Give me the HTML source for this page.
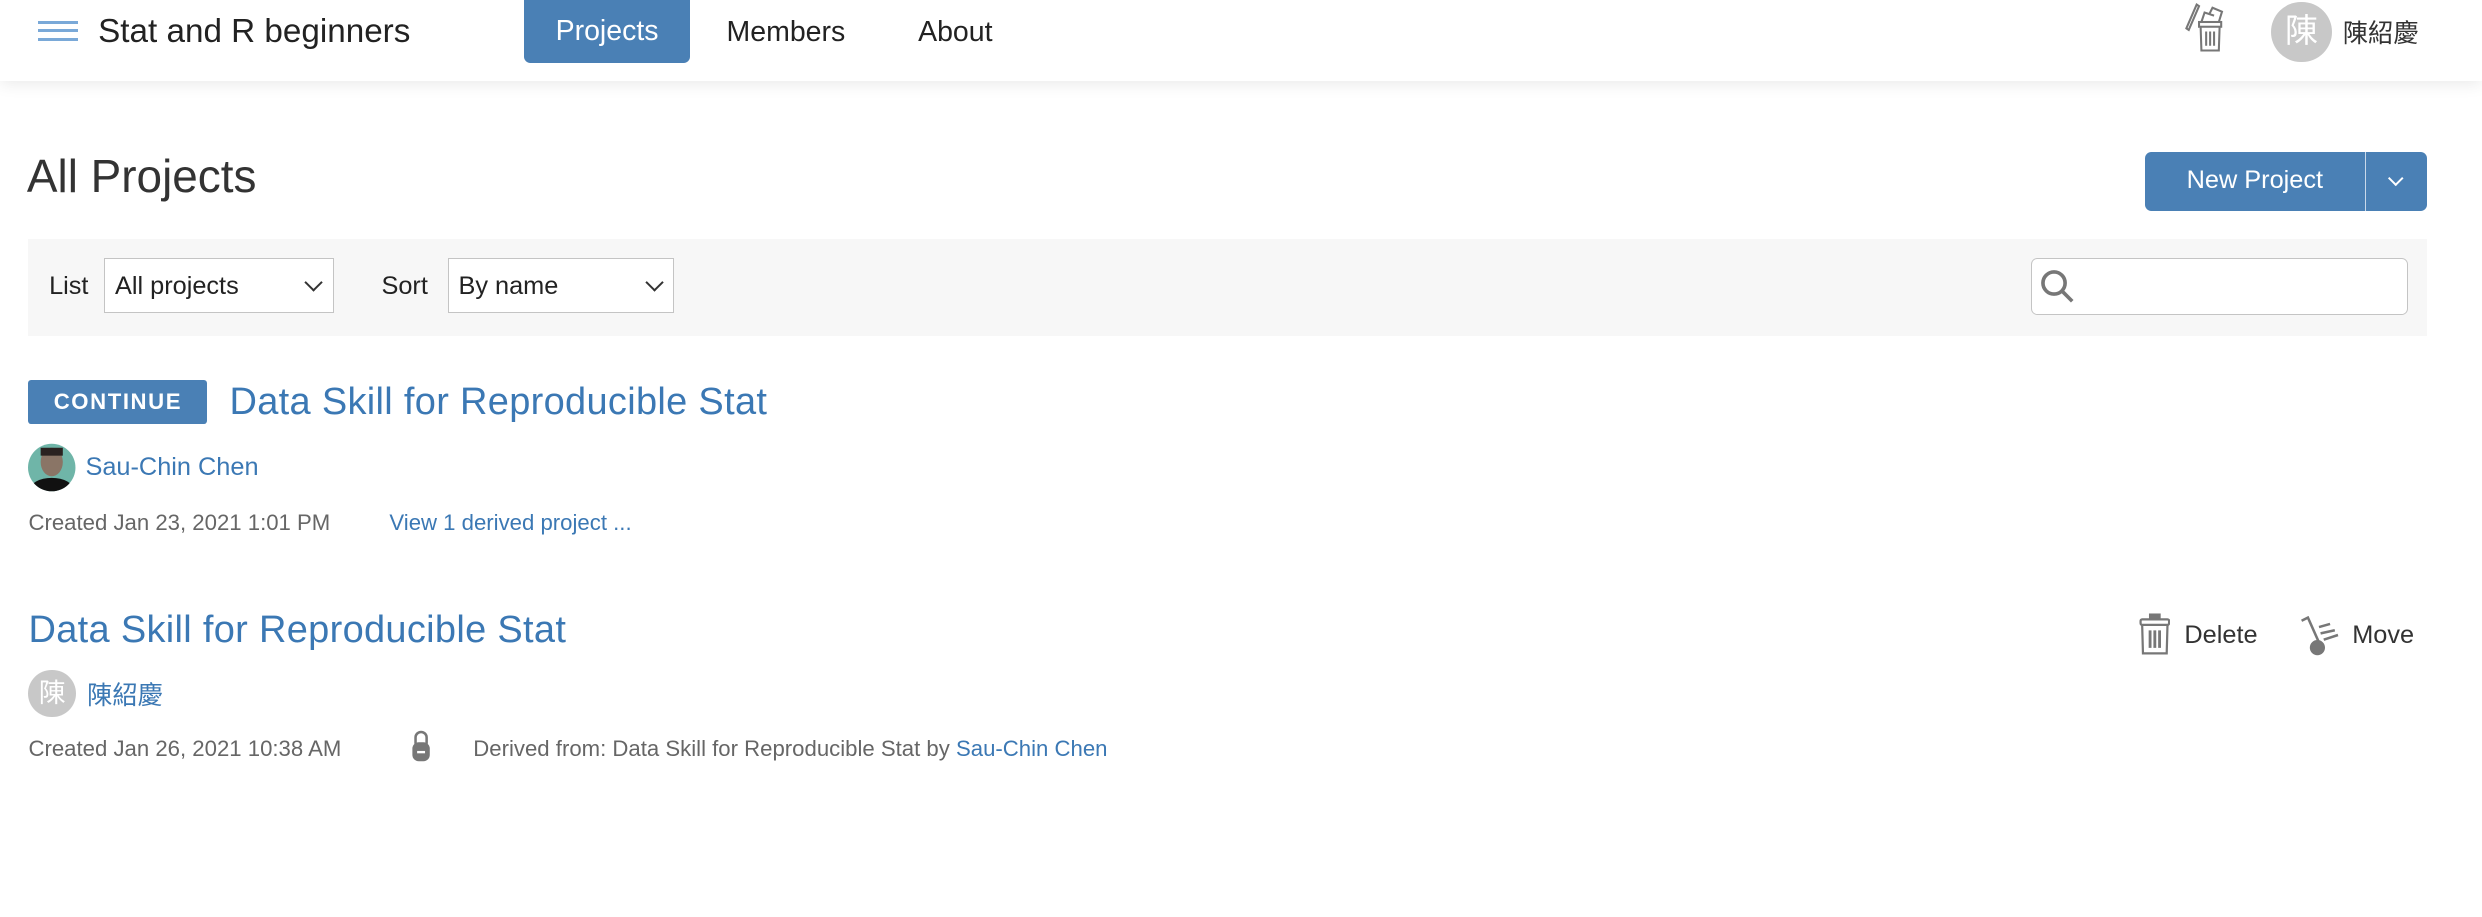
<!DOCTYPE html>
<html><head><meta charset="utf-8"><style>
html,body{margin:0;padding:0;background:#fff;overflow:hidden}
body{width:1568px;height:579px;zoom:1.58291;position:relative;font-family:"Liberation Sans","Noto Sans CJK TC",sans-serif;color:#222}
.a{position:absolute;white-space:nowrap}
.hdr{position:absolute;left:0;top:0;width:1568px;height:51px;background:#fff;box-shadow:0 2px 10px rgba(0,0,0,.09)}
.blue{color:#3b78b4}
.sel{position:absolute;top:163px;border:1px solid #c4c4c4;background:#fff;font-size:16px;line-height:35px;padding-left:6px;box-sizing:border-box;height:35px}
.chev{position:absolute;right:8px;top:11px;width:7px;height:7px;border-right:1.3px solid #333;border-bottom:1.3px solid #333;transform:rotate(45deg)}
.meta{font-size:14px;color:#666}
</style></head><body>
<div class="hdr"></div>
<div class="a" style="left:24px;top:13px;width:25px">
 <div style="height:2px;background:#7aa9d8;margin-bottom:3.5px"></div>
 <div style="height:2px;background:#7aa9d8;margin-bottom:3.5px"></div>
 <div style="height:2px;background:#7aa9d8"></div>
</div>
<div class="a" style="left:62px;top:8px;font-size:21px;color:#222">Stat and R beginners</div>
<div class="a" style="left:331px;top:0;width:105px;height:40px;background:#4a80b5;border-radius:0 0 4px 4px;color:#fff;font-size:18px;line-height:40px;text-align:center">Projects</div>
<div class="a" style="left:459px;top:10px;font-size:18px">Members</div>
<div class="a" style="left:580px;top:10px;font-size:18px">About</div>
<svg class="a" style="left:1380px;top:2px" width="30" height="32" viewBox="0 0 30 32" fill="none" stroke="#777" stroke-width="1.3">
 <path d="M1.5 16 L8 1 L9.5 2 L3 17 Z"/>
 <path d="M11 12 L13 6 L19 8 M16 7 L18 3 L24 5.5 L22 12"/>
 <rect x="9.5" y="12" width="14" height="3"/>
 <path d="M10.5 15 L11 30 L22 30 L22.5 15"/>
 <path d="M14 18 V27 M16.5 18 V27 M19 18 V27"/>
</svg>
<div class="a" style="left:1435px;top:1px;width:38px;height:38px;border-radius:50%;background:#c8c8c8;color:#fff;font-size:21px;line-height:38px;text-align:center">陳</div>
<div class="a" style="left:1480px;top:9px;font-size:16px;color:#333">陳紹慶</div>

<div class="a" style="left:17px;top:94px;font-size:29px;font-weight:300;color:#333">All Projects</div>
<div class="a" style="left:1355px;top:96px;width:178px;height:37px;background:#4a80b5;border-radius:4px"></div>
<div class="a" style="left:1494px;top:96px;width:1px;height:37px;background:#c9d9ea"></div>
<div class="a" style="left:1355px;top:105px;width:139px;text-align:center;color:#fff;font-size:16px">New Project</div>
<div class="a" style="left:1510px;top:109px;width:6px;height:6px;border-right:1.3px solid #fff;border-bottom:1.3px solid #fff;transform:rotate(45deg)"></div>

<div class="a" style="left:18px;top:151px;width:1515px;height:61px;background:#f7f7f7"></div>
<div class="a" style="left:31px;top:172px;font-size:16px">List</div>
<div class="sel" style="left:66px;width:145px">All projects<div class="chev"></div></div>
<div class="a" style="left:241px;top:172px;font-size:16px">Sort</div>
<div class="sel" style="left:283px;width:143px">By name<div class="chev"></div></div>
<div class="a" style="left:1283px;top:163px;width:238px;height:36px;border:1px solid #c4c4c4;border-radius:4px;background:#fff;box-sizing:border-box"></div>
<svg class="a" style="left:1288px;top:169px" width="25" height="25" viewBox="0 0 25 25" fill="none" stroke="#777" stroke-width="2.3"><circle cx="9.5" cy="9.5" r="7"/><path d="M14.5 14.5 L21 21"/></svg>

<div class="a" style="left:18px;top:240px;width:113px;height:28px;background:#4a80b5;border-radius:2px;color:#fff;font-size:14px;font-weight:bold;letter-spacing:1px;line-height:28px;text-align:center">CONTINUE</div>
<div class="a blue" style="left:145px;top:241px;font-size:24px;letter-spacing:0.2px">Data Skill for Reproducible Stat</div>
<svg class="a" style="left:18px;top:280px" width="30" height="31" viewBox="0 0 30 31"><defs><clipPath id="c"><circle cx="15" cy="15.5" r="15"/></clipPath></defs><g clip-path="url(#c)"><rect width="30" height="31" fill="#6fb5a8"/><ellipse cx="15" cy="12" rx="7" ry="9" fill="#8a7566"/><rect x="8" y="3" width="14" height="5" fill="#2a2220"/><ellipse cx="15" cy="30" rx="14" ry="8" fill="#111"/></g></svg>
<div class="a blue" style="left:54px;top:286px;font-size:16px">Sau-Chin Chen</div>
<div class="a meta" style="left:18px;top:322px">Created Jan 23, 2021 1:01 PM</div>
<div class="a blue" style="left:246px;top:322px;font-size:14px">View 1 derived project ...</div>

<div class="a blue" style="left:18px;top:385px;font-size:24px;letter-spacing:0.2px">Data Skill for Reproducible Stat</div>
<div class="a" style="left:18px;top:423px;width:30px;height:30px;border-radius:50%;background:#c8c8c8;color:#fff;font-size:17px;line-height:30px;text-align:center">陳</div>
<div class="a blue" style="left:55px;top:427px;font-size:16px">陳紹慶</div>
<div class="a meta" style="left:18px;top:465px">Created Jan 26, 2021 10:38 AM</div>
<svg class="a" style="left:259px;top:460px" width="14" height="22" viewBox="0 0 14 22"><path d="M3.5 10 V6 a3.5 3.5 0 0 1 7 0 V10" fill="none" stroke="#777" stroke-width="1.6"/><rect x="1.5" y="9" width="11" height="12" rx="4" fill="#777"/><rect x="4.5" y="14.5" width="5" height="1.5" fill="#fff"/></svg>
<div class="a meta" style="left:299px;top:465px">Derived from: Data Skill for Reproducible Stat by <span class="blue">Sau-Chin Chen</span></div>

<svg class="a" style="left:1351px;top:387px" width="20" height="27" viewBox="0 0 20 27" fill="none" stroke="#777" stroke-width="1.4"><rect x="7" y="1" width="6" height="3" fill="#777"/><rect x="1" y="4" width="18" height="3.5" rx="1"/><path d="M2 7.5 L2.5 25.5 H17.5 L18 7.5"/><path d="M7 11 V22 M10 11 V22 M13 11 V22" stroke-width="1.8"/></svg>
<div class="a" style="left:1380px;top:392px;font-size:16px;color:#333">Delete</div>
<svg class="a" style="left:1453px;top:389px" width="30" height="26" viewBox="0 0 30 26" fill="none" stroke="#777" stroke-width="1.6"><path d="M1 3 L5 1 L13 19"/><path d="M12 7 L19 5 M13 11 L22 9 M15 15 L24 12"/><circle cx="11" cy="20" r="4" fill="#777"/></svg>
<div class="a" style="left:1486px;top:392px;font-size:16px;color:#333">Move</div>
</body></html>
